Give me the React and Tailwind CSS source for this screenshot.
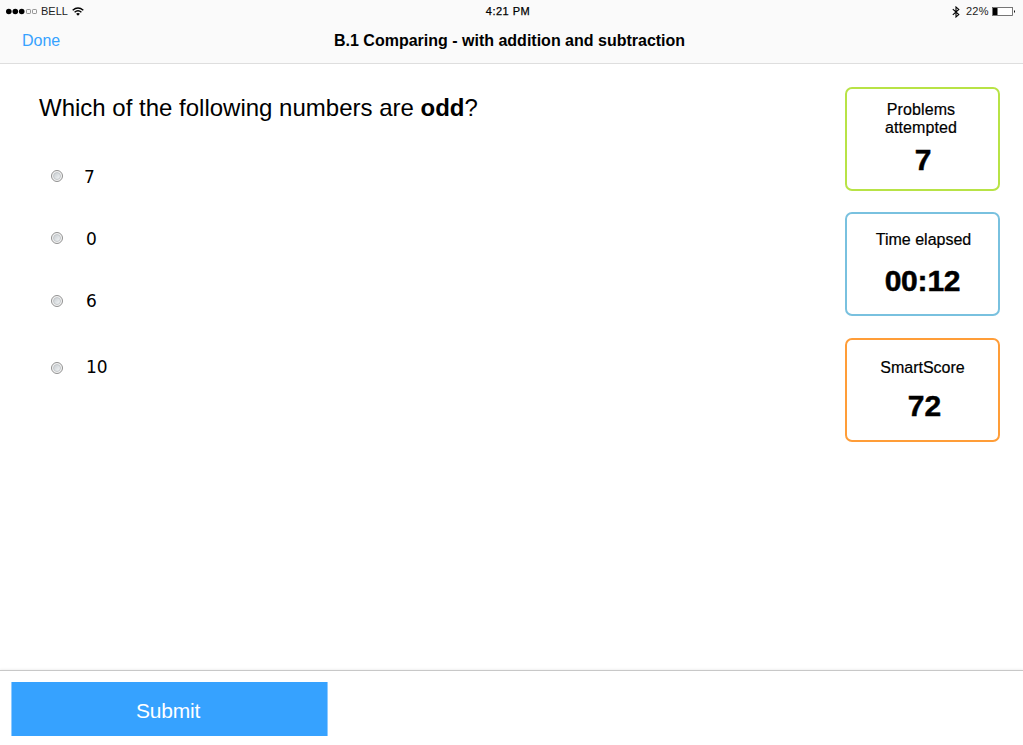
import React from "react";

function StatusBar() {
  return (
    <div className="grid h-[23px] grid-cols-3 items-center text-[11px] leading-[23px]">
      <div className="flex items-center pl-[6px]">
        <svg width="32" height="7" viewBox="0 0 32 7" className="block">
          <circle cx="2.8" cy="3.5" r="2.8" />
          <circle cx="9.3" cy="3.5" r="2.8" />
          <circle cx="15.7" cy="3.5" r="2.8" />
          <rect x="20.5" y="1.5" width="4" height="4" rx="0.7" fill="none" stroke="#888" strokeWidth="0.9" />
          <rect x="26.5" y="1.5" width="4" height="4" rx="0.7" fill="none" stroke="#888" strokeWidth="0.9" />
        </svg>
        <span className="ml-[3px] w-[27px] whitespace-nowrap text-[11px] text-[#222]">BELL</span>
        <svg width="12" height="9" viewBox="0 0 12 9" className="ml-[4px] block" fill="none" stroke="#000" strokeWidth="1.4">
          <path d="M0.7 3.2 Q6 -1.4 11.3 3.2" />
          <path d="M2.6 5.3 Q6 2.3 9.4 5.3" />
          <path d="M4.1 6.7 Q6 5.2 7.9 6.7 L6 8.8 Z" fill="#000" stroke="none" />
        </svg>
      </div>
      <div className="pr-[7px] text-center tracking-[0.5px] [-webkit-text-stroke:0.25px_#000]">4:21 PM</div>
      <div className="flex items-center justify-end pr-[7px]">
        <svg width="8" height="12" viewBox="0 0 8 12" className="block" fill="none" stroke="#000" strokeWidth="1.1">
          <path d="M0.8 3.1 L6.8 8.6 L4 11 V1 L6.8 3.4 L0.8 8.9" />
        </svg>
        <span className="ml-[6px] w-[23px] whitespace-nowrap text-[#222] tracking-[0.2px]">22%</span>
        <svg width="24" height="9" viewBox="0 0 24 9" className="ml-[3px] block">
          <rect x="0.5" y="0.5" width="20" height="8" fill="#fff" stroke="#555" strokeWidth="0.8" />
          <rect x="1" y="1" width="4.5" height="7" />
          <path d="M22 3 Q24 4.5 22 6 Z" />
        </svg>
      </div>
    </div>
  );
}

function Choice({ label, className, labelClass }) {
  return (
    <label className={"flex h-[20px] items-center " + className}>
      <span className="flex size-[12px] shrink-0 items-center justify-center rounded-full border border-[#919191] bg-[#f4f4f4]">
        <span className="size-[8px] rounded-full border border-[#c3c7ca] bg-linear-to-br from-[#c9ced2] to-[#f3f5f6]" />
      </span>
      <span className={"text-[17px] leading-[20px] font-['DejaVu_Sans',sans-serif] " + labelClass}>{label}</span>
    </label>
  );
}

function Card({ className, children }) {
  return (
    <div className={"h-[104px] w-[155px] rounded-[7px] border-2 text-center " + className}>{children}</div>
  );
}

export default function App() {
  return (
    <div className="flex h-[745px] w-[1023px] flex-col overflow-hidden bg-white font-['Liberation_Sans',Arial,sans-serif] text-black">
      <header className="h-[64px] border-b border-[#dedede] bg-[#fafafa]">
        <StatusBar />
        <div className="flex h-[36px] items-center">
          <button className="ml-[22px] w-[312px] text-left text-[16px] text-[#36a2ff]">Done</button>
          <h1 className="whitespace-nowrap text-[16px] font-bold">B.1 Comparing - with addition and subtraction</h1>
        </div>
      </header>

      <main className="flex flex-1 justify-between">
        <section className="pl-[39px]">
          <h2 className="mt-[28px] h-[32px] whitespace-nowrap text-[24px] leading-[32px]">
            Which of the following numbers are <b>odd</b>?
          </h2>
          <Choice label="7" className="ml-[12px] mt-[42px]" labelClass="ml-[21px] pt-[2px]" />
          <Choice label="0" className="ml-[12px] mt-[42px]" labelClass="ml-[23px] pt-[2px]" />
          <Choice label="6" className="ml-[12px] mt-[43px]" labelClass="ml-[23px]" />
          <Choice label="10" className="ml-[12px] mt-[47px]" labelClass="ml-[23px] pb-[2px]" />
        </section>
        <aside className="mr-[23px] mt-[23px]">
          <Card className="border-[#b8e346] pt-[12px]">
            <p className="pr-[3px] text-[16px] leading-[18px] tracking-[0.1px] [-webkit-text-stroke:0.2px_#000]">Problems<br />attempted</p>
            <p className="mt-[6px] pl-[1px] text-[30px] font-bold leading-[34px] [-webkit-text-stroke:0.5px_#000]">7</p>
          </Card>
          <Card className="mt-[21px] border-[#79c1df] pt-[17px]">
            <p className="pl-[2px] text-[16px] leading-[18px] [-webkit-text-stroke:0.2px_#000]">Time elapsed</p>
            <p className="mt-[15px] text-[30px] font-bold leading-[34px] tracking-[-0.2px] [-webkit-text-stroke:0.5px_#000]">00:12</p>
          </Card>
          <Card className="mt-[22px] border-[#ff9d38] pt-[19px]">
            <p className="text-[16px] leading-[18px] [-webkit-text-stroke:0.2px_#000]">SmartScore</p>
            <p className="mt-[12px] pl-[4px] text-[30px] font-bold leading-[34px] [-webkit-text-stroke:0.5px_#000]">72</p>
          </Card>
        </aside>
      </main>

      <footer className="h-[75px] border-t border-[#c8c8c8] pl-[11px] pt-[11px] shadow-[0_-1px_2px_rgba(0,0,0,0.06)]">
        <button className="block h-[54px] w-[317px] border-x border-[#8fcaff] bg-[#36a2ff] pr-[3px] pt-[4px] text-[21px] tracking-[-0.2px] text-white">
          Submit
        </button>
      </footer>
    </div>
  );
}
